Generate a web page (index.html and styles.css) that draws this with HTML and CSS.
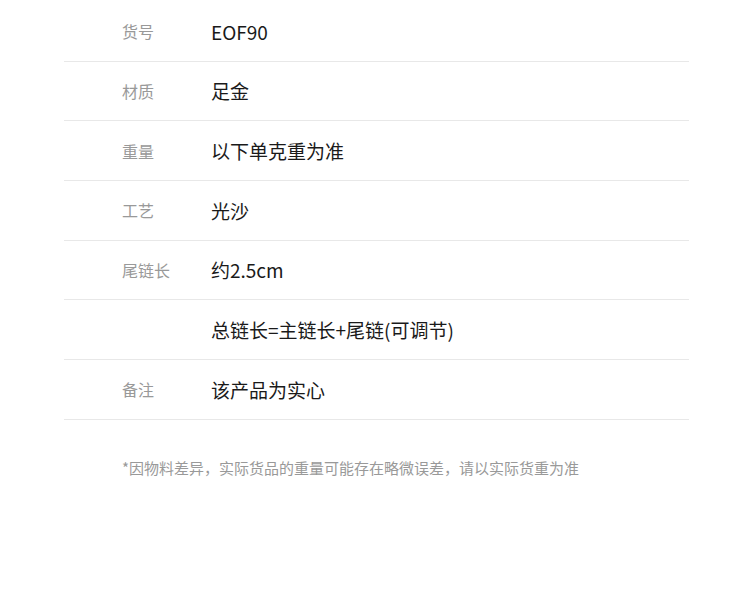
FILE: index.html
```html
<!DOCTYPE html>
<html lang="zh">
<head>
<meta charset="utf-8">
<link rel="stylesheet" href="styles.css">
</head>
<body>
<div class="spec">
  <div class="row"><div class="label">货号</div><div class="value">EOF90</div></div>
  <div class="row"><div class="label">材质</div><div class="value">足金</div></div>
  <div class="row"><div class="label">重量</div><div class="value">以下单克重为准</div></div>
  <div class="row"><div class="label">工艺</div><div class="value">光沙</div></div>
  <div class="row"><div class="label">尾链长</div><div class="value">约2.5cm</div></div>
  <div class="row"><div class="label"></div><div class="value">总链长=主链长+尾链(可调节)</div></div>
  <div class="row"><div class="label">备注</div><div class="value">该产品为实心</div></div>
  <p class="note">*因物料差异，实际货品的重量可能存在略微误差，请以实际货重为准</p>
</div>
</body>
</html>
```

FILE: styles.css
```css
html, body {
  margin: 0;
  padding: 0;
  background: #fff;
}
body {
  font-family: "Noto Sans CJK SC", "Noto Sans", sans-serif;
}
.spec {
  margin-left: 64px;
  padding-top: 2px;
  width: 625px;
}
.row {
  display: flex;
  align-items: center;
  height: 58.67px;
  border-bottom: 1px solid #e8e8e8;
}
.label {
  width: 89px;
  padding-left: 58px;
  box-sizing: content-box;
  font-size: 16px;
  color: #999;
}
.value {
  font-size: 19px;
  color: #1a1a1a;
}
.note {
  margin: 38px 0 0 58px;
  font-size: 15px;
  color: #999;
  line-height: 20px;
}
```
